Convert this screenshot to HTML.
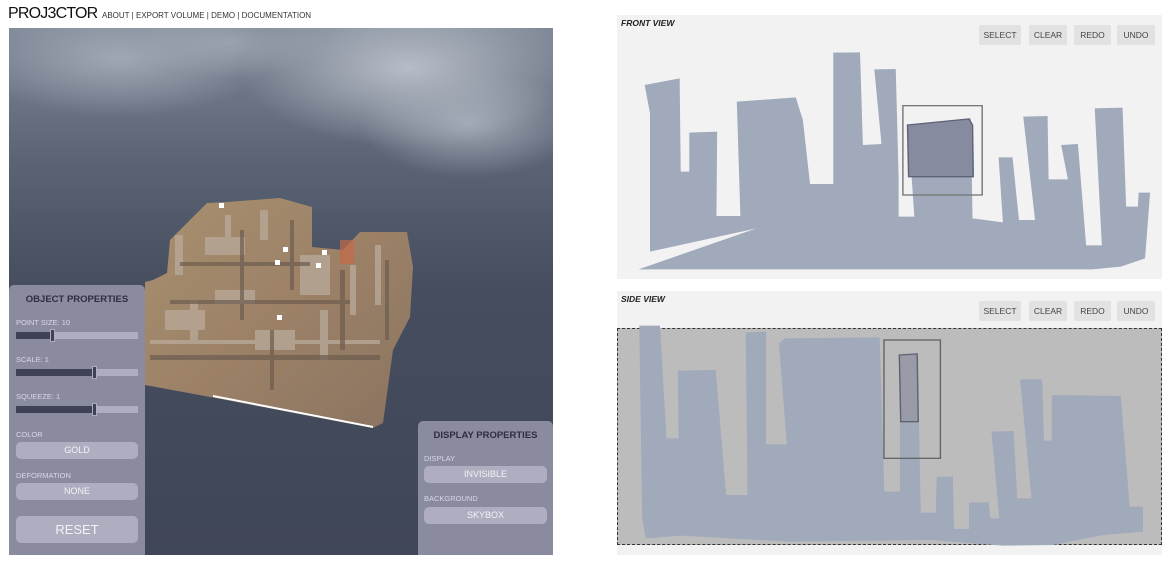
<!DOCTYPE html>
<html><head><meta charset="utf-8"><style>
*{margin:0;padding:0;box-sizing:border-box}
body{width:1169px;height:561px;background:#fff;position:relative;overflow:hidden;font-family:"Liberation Sans",sans-serif}
.abs{position:absolute}
.logo{left:8px;top:5px;font-size:16px;color:#111;letter-spacing:-0.8px}
.nav{left:102px;top:11px;font-size:8px;color:#333}
.panel{background:#8b8b9f;border-radius:5px 5px 0 0}
.ttl{font-size:9.5px;font-weight:bold;color:#2e2e40;text-align:center}
.lbl{font-size:7.5px;color:#d8d8e4}
.btn{background:#aeaec0;border-radius:5px;color:#f2f2f8;font-size:9px;text-align:center}
.slider{height:7px;background:#aeaec0}
.slider i{display:block;height:7px;background:#3f4257}
.knob{position:absolute;width:5px;height:13px;background:#3f4257;border:1px solid #aeaec0;top:-3px}
.vbtn{background:#e2e2e2;border-radius:2px;font-size:8.5px;color:#444;text-align:center;line-height:20px;height:20px;top:25px}
.vt{font-size:8.5px;font-style:italic;font-weight:bold;color:#222}
</style></head><body>
<div class="abs logo">PROJ3CTOR</div>
<div class="abs nav">ABOUT | EXPORT VOLUME | DEMO | DOCUMENTATION</div>

<div class="abs" style="left:9px;top:28px;width:544px;height:527px;overflow:hidden;background:linear-gradient(180deg,#7e8796 0%,#5a6474 25%,#454d5e 50%,#3f4657 100%)">
<div class="abs" style="left:-40px;top:-30px;width:300px;height:120px;background:radial-gradient(ellipse,rgba(170,178,190,.8),rgba(170,178,190,0) 70%)"></div>
<div class="abs" style="left:230px;top:-40px;width:340px;height:160px;background:radial-gradient(ellipse,rgba(190,196,206,.9),rgba(190,196,206,0) 70%)"></div>
<div class="abs" style="left:350px;top:40px;width:220px;height:110px;background:radial-gradient(ellipse,rgba(175,182,194,.8),rgba(175,182,194,0) 70%)"></div>
<div class="abs" style="left:120px;top:-20px;width:200px;height:70px;background:radial-gradient(ellipse,rgba(165,172,184,.7),rgba(165,172,184,0) 70%)"></div>
<svg class="abs" style="left:-9px;top:-28px" width="560" height="560">
<defs><linearGradient id="g" x1="0" y1="0" x2="1" y2="1"><stop offset="0" stop-color="#a8906f"/><stop offset=".5" stop-color="#9c8167"/><stop offset="1" stop-color="#8a7460"/></linearGradient></defs>
<polygon points="145,282 153,280 167,273 170,240 207,203 227,202 280,198 312,207 312,247 343,250 360,232 407,232 413,267 410,317 393,350 383,423 373,428 210,397 145,385" fill="url(#g)"/>
<g fill="#b8a898" opacity=".8">
<rect x="205" y="237" width="40" height="18"/><rect x="165" y="310" width="40" height="20"/><rect x="255" y="330" width="40" height="20"/><rect x="300" y="255" width="30" height="40"/><rect x="215" y="290" width="40" height="14"/>
<rect x="175" y="235" width="8" height="40"/><rect x="225" y="215" width="6" height="25"/><rect x="260" y="210" width="8" height="30"/><rect x="350" y="265" width="6" height="50"/><rect x="375" y="245" width="6" height="60"/><rect x="150" y="340" width="230" height="4"/><rect x="320" y="310" width="8" height="50"/><rect x="190" y="300" width="8" height="40"/>
</g>
<g fill="#6c5c4e" opacity=".7">
<rect x="150" y="355" width="230" height="5"/><rect x="170" y="300" width="180" height="4"/><rect x="180" y="262" width="130" height="4"/><rect x="340" y="270" width="5" height="80"/><rect x="290" y="220" width="4" height="70"/><rect x="240" y="230" width="4" height="90"/><rect x="385" y="260" width="4" height="80"/><rect x="270" y="330" width="4" height="60"/>
</g>
<rect x="340" y="240" width="14" height="24" fill="#c46a48" opacity=".7"/>
<polygon points="213,397 373,428 373,426 213,395" fill="#fff"/>
<g fill="#fff"><rect x="219" y="203" width="5" height="5"/><rect x="283" y="247" width="5" height="5"/><rect x="275" y="260" width="5" height="5"/><rect x="316" y="263" width="5" height="5"/><rect x="322" y="250" width="5" height="5"/><rect x="277" y="315" width="5" height="5"/></g>
</svg>
</div>

<div class="abs panel" style="left:9px;top:285px;width:136px;height:270px">
<div class="abs ttl" style="left:0;width:136px;top:9px">OBJECT PROPERTIES</div>
<div class="abs lbl" style="left:7px;top:33px">POINT SIZE: 10</div>
<div class="abs slider" style="left:7px;top:47px;width:122px"><i style="width:38px"></i><div class="knob" style="left:34px"></div></div>
<div class="abs lbl" style="left:7px;top:70px">SCALE: 1</div>
<div class="abs slider" style="left:7px;top:84px;width:122px"><i style="width:78px"></i><div class="knob" style="left:76px"></div></div>
<div class="abs lbl" style="left:7px;top:107px">SQUEEZE: 1</div>
<div class="abs slider" style="left:7px;top:121px;width:122px"><i style="width:78px"></i><div class="knob" style="left:76px"></div></div>
<div class="abs lbl" style="left:7px;top:145px">COLOR</div>
<div class="abs btn" style="left:7px;top:157px;width:122px;height:17px;line-height:17px">GOLD</div>
<div class="abs lbl" style="left:7px;top:186px">DEFORMATION</div>
<div class="abs btn" style="left:7px;top:198px;width:122px;height:17px;line-height:17px">NONE</div>
<div class="abs btn" style="left:7px;top:231px;width:122px;height:27px;line-height:27px;font-size:13px">RESET</div>
</div>

<div class="abs panel" style="left:418px;top:421px;width:135px;height:134px">
<div class="abs ttl" style="left:0;width:135px;top:9px">DISPLAY PROPERTIES</div>
<div class="abs lbl" style="left:6px;top:33px">DISPLAY</div>
<div class="abs btn" style="left:6px;top:45px;width:123px;height:17px;line-height:17px">INVISIBLE</div>
<div class="abs lbl" style="left:6px;top:73px">BACKGROUND</div>
<div class="abs btn" style="left:6px;top:86px;width:123px;height:17px;line-height:17px">SKYBOX</div>
</div>

<div class="abs" style="left:617px;top:15px;width:545px;height:264px;background:#f2f2f2"></div>
<svg class="abs" style="left:610px;top:10px" width="559" height="280" viewBox="0 0 1565 840" preserveAspectRatio="none">
<polygon fill="#a0aaba" points="80,778 410,655 112,725 112,310 97,225 195,205 198,485 222,485 222,368 300,365 298,618 365,618 355,275 520,262 540,330 560,522 625,522 625,128 700,127 708,405 760,402 740,178 800,177 808,500 808,620 852,620 835,350 1010,325 1015,625 1100,637 1088,442 1127,442 1145,630 1190,630 1157,320 1225,318 1228,508 1282,508 1263,405 1310,402 1333,706 1377,706 1357,295 1435,293 1445,590 1478,590 1480,548 1512,548 1498,745 1430,770 1350,778"/>
<polygon fill="#868ba0" stroke="#5e6278" stroke-width="4" points="833,345 1005,327 1015,345 1017,500 836,500"/>
<rect x="820" y="287" width="222" height="268" fill="none" stroke="#777" stroke-width="4"/>
</svg>
<div class="abs vt" style="left:621px;top:18px">FRONT VIEW</div>
<div class="abs vbtn" style="left:979px;width:42px">SELECT</div>
<div class="abs vbtn" style="left:1029px;width:38px">CLEAR</div>
<div class="abs vbtn" style="left:1074px;width:37px">REDO</div>
<div class="abs vbtn" style="left:1117px;width:38px">UNDO</div>

<div class="abs" style="left:617px;top:291px;width:545px;height:264px;background:#f2f2f2"></div>
<div class="abs" style="left:617px;top:328px;width:545px;height:217px;background:#bcbcbc;border:1px dashed #333"></div>
<svg class="abs" style="left:610px;top:285px" width="559" height="276" viewBox="0 0 1565 828" preserveAspectRatio="none">
<polygon fill="#a0aaba" points="82,122 140,122 158,460 192,460 190,257 296,255 325,630 385,630 380,142 437,140 437,478 495,478 473,175 490,160 755,157 768,620 812,620 812,412 865,412 870,683 912,683 915,575 960,575 963,732 1005,732 1005,652 1060,652 1065,700 1090,700 1068,440 1130,438 1140,640 1180,640 1148,283 1210,283 1215,467 1237,467 1237,330 1430,333 1455,665 1492,665 1492,740 1380,750 1240,780 1100,782 900,765 500,770 200,752 100,760 90,700"/>
<polygon fill="#9a9ba8" stroke="#60626f" stroke-width="4" points="810,210 860,207 863,410 814,410"/>
<rect x="767" y="165" width="158" height="355" fill="none" stroke="#666" stroke-width="4"/>
</svg>
<div class="abs vt" style="left:621px;top:294px">SIDE VIEW</div>
<div class="abs vbtn" style="left:979px;top:301px;width:42px">SELECT</div>
<div class="abs vbtn" style="left:1029px;top:301px;width:38px">CLEAR</div>
<div class="abs vbtn" style="left:1074px;top:301px;width:37px">REDO</div>
<div class="abs vbtn" style="left:1117px;top:301px;width:38px">UNDO</div>
</body></html>
